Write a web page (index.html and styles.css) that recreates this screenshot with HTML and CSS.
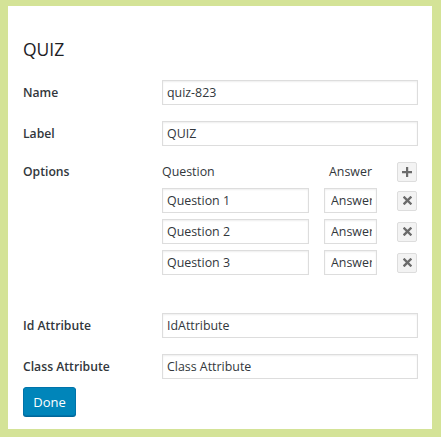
FILE: index.html
```html
<!DOCTYPE html>
<html>
<head>
<meta charset="utf-8">
<link rel="stylesheet" href="styles.css">
</head>
<body>
<div class="panel">
  <h2 class="title">QUIZ</h2>
  <div class="row">
    <label class="lbl">Name</label>
    <input class="field" value="quiz-823">
  </div>
  <div class="row">
    <label class="lbl">Label</label>
    <input class="field" value="QUIZ">
  </div>
  <div class="row options">
    <label class="lbl top">Options</label>
    <div class="opt-grid">
      <span class="hdr">Question</span>
      <span class="hdr center">Answer</span>
      <button class="ibtn" aria-label="add"><svg width="10" height="10" viewBox="0 0 10 10"><path d="M4 0h2.2v4H10v2.2H6.2V10H4V6.2H0V4h4z" fill="#6b6b6b"/></svg></button>

      <input class="field" value="Question 1">
      <input class="field ans" value="Answer">
      <button class="ibtn" aria-label="remove"><svg width="9" height="9" viewBox="0 0 9 9"><path d="M1.5 1.5l6 6M7.5 1.5l-6 6" stroke="#6b6b6b" stroke-width="2.4" stroke-linecap="square"/></svg></button>

      <input class="field" value="Question 2">
      <input class="field ans" value="Answer">
      <button class="ibtn" aria-label="remove"><svg width="9" height="9" viewBox="0 0 9 9"><path d="M1.5 1.5l6 6M7.5 1.5l-6 6" stroke="#6b6b6b" stroke-width="2.4" stroke-linecap="square"/></svg></button>

      <input class="field" value="Question 3">
      <input class="field ans" value="Answer">
      <button class="ibtn" aria-label="remove"><svg width="9" height="9" viewBox="0 0 9 9"><path d="M1.5 1.5l6 6M7.5 1.5l-6 6" stroke="#6b6b6b" stroke-width="2.4" stroke-linecap="square"/></svg></button>
    </div>
  </div>
  <div class="row attr">
    <label class="lbl">Id Attribute</label>
    <input class="field" value="IdAttribute">
  </div>
  <div class="row">
    <label class="lbl">Class Attribute</label>
    <input class="field" value="Class Attribute">
  </div>
  <button class="done">Done</button>
</div>
</body>
</html>
```

FILE: styles.css
```css
* { box-sizing: border-box; }
html, body { margin: 0; padding: 0; }
body {
  background: #d4e397;
  width: 441px;
  height: 437px;
  padding: 6px 9px 8px 8px;
  font-family: "Open Sans", "DejaVu Sans", sans-serif;
  color: #32373c;
}
.panel {
  background: #fff;
  height: 423px;
  padding: 31px 14px 0 15px;
}
.title {
  margin: 0 0 19px 0;
  font-size: 17.5px;
  font-weight: 400;
  line-height: 24px;
  color: #1d2125;
}
.row {
  display: flex;
  align-items: center;
  margin-bottom: 16px;
}
.lbl {
  width: 139px;
  flex: none;
  font-size: 12.2px;
  font-weight: 600;
  color: #32373c;
}
.field {
  display: block;
  width: 256px;
  height: 25px;
  border: 1px solid #ddd;
  box-shadow: inset 0 1px 2px rgba(0,0,0,0.07);
  background: #fff;
  padding: 0 4px;
  font-family: "Open Sans", "DejaVu Sans", sans-serif;
  font-size: 12.4px;
  color: #32373c;
  outline: none;
  margin: 0;
}
.options {
  align-items: flex-start;
  margin-top: 15px;
  margin-bottom: 38px;
}
.lbl.top { line-height: 20px; }
.opt-grid {
  display: grid;
  grid-template-columns: 147px 53px 20px;
  column-gap: 15px;
  row-gap: 6px;
  align-items: center;
}
.opt-grid > :nth-child(3n) { margin-left: 5px; }
.opt-grid .field { width: 147px; }
.opt-grid .field.ans { width: 53px; padding-left: 6px; }
.opt-grid > .field:first-of-type { margin-top: -1px; }
.hdr {
  font-size: 12.4px;
  line-height: 20px;
  color: #32373c;
}
.hdr.center { text-align: center; }
.ibtn {
  width: 20px;
  height: 20px;
  padding: 0;
  margin: 0;
  border: 1px solid #ddd;
  border-radius: 2px;
  background: #f3f3f3;
  display: flex;
  align-items: center;
  justify-content: center;
}
.attr { margin-bottom: 16px; }
.row:last-of-type { margin-bottom: 8px; }
.done {
  display: block;
  width: 53px;
  height: 29px;
  padding: 0;
  background: #0085ba;
  border: 1px solid #0073aa;
  border-radius: 3px;
  box-shadow: 0 1px 0 #006799;
  color: #fff;
  font-family: "Open Sans", "DejaVu Sans", sans-serif;
  font-size: 13px;
}
```
